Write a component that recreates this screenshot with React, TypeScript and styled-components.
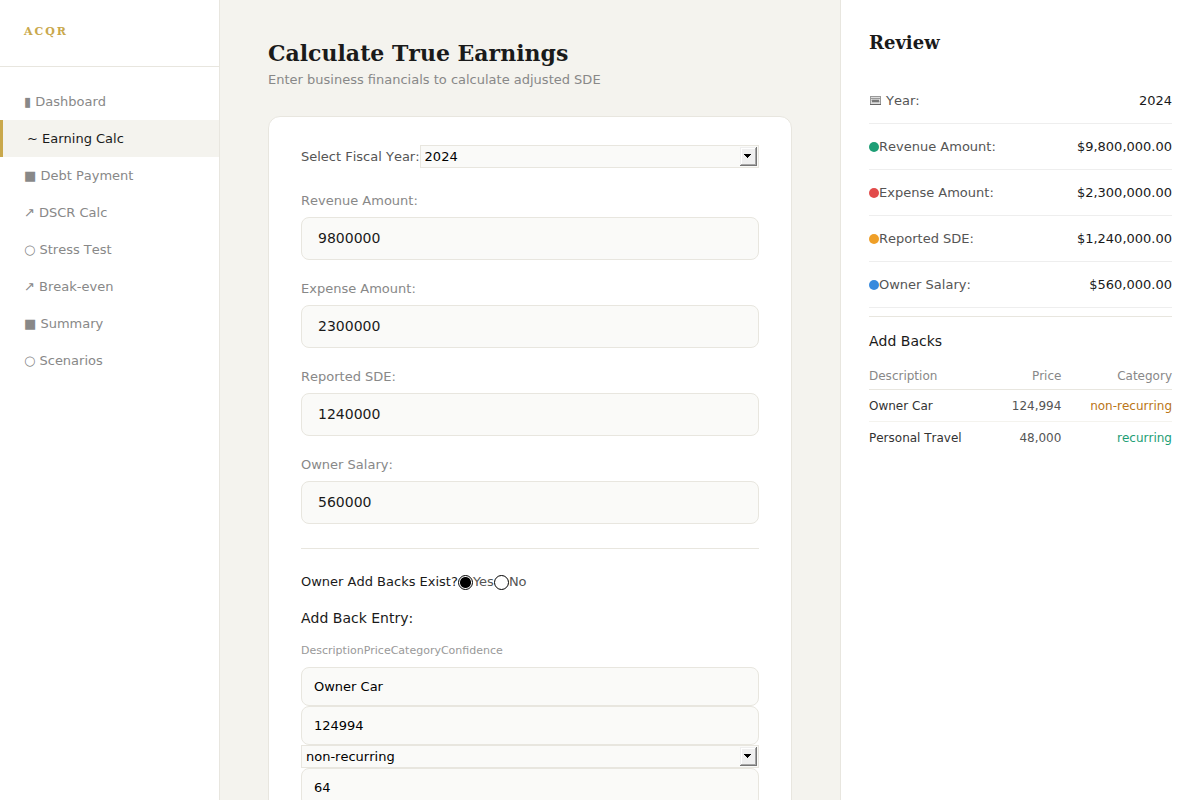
import React, { useState } from "react";
import styled, { createGlobalStyle, css } from "styled-components";

const SANS = '"DejaVu Sans", Verdana, sans-serif';
const SERIF = '"DejaVu Serif", Georgia, serif';
const LINE = "#e8e6df";

const GlobalStyle = createGlobalStyle`
  *, *::before, *::after { box-sizing: border-box; }
  body {
    margin: 0;
    background: #f4f3ee;
    color: #1a1a1a;
    font: 13px/17px ${SANS};
  }
  body, input, select, h1, h2, h3 { font-kerning: none; }
  h1, h2, h3, p, ul, dl, dd, fieldset { margin: 0; padding: 0; }
  input, select { font-family: inherit; }
`;

const Shell = styled.div`
  display: grid;
  grid-template-columns: 220px minmax(0, 1fr) 360px;
  height: 100vh;
`;

const Sidebar = styled.aside`
  background: #fff;
  border-right: 1px solid ${LINE};
`;

const Logo = styled.div`
  padding: 23px 24px 26px;
  border-bottom: 1px solid ${LINE};
  font: bold 11px/17px ${SERIF};
  font-kerning: none;
  letter-spacing: 2px;
  color: #c9a84c;
`;

const Nav = styled.nav`
  display: flex;
  flex-direction: column;
  padding: 16px 0;
`;

const NavLink = styled.a<{ $active?: boolean }>`
  padding: 10px 24px;
  color: #888;
  text-decoration: none;
  ${(p) =>
    p.$active &&
    css`
      border-left: 3px solid #c9a84c;
      background: #f4f3ee;
      color: #1a1a1a;
    `}
`;

const Main = styled.main`
  padding: 40px 48px;
  overflow-y: auto;
  scrollbar-width: none;
`;

const PageTitle = styled.h1`
  font: bold 22px/26px ${SERIF};
  font-kerning: none;
`;

const Subtitle = styled.p`
  margin-top: 5px;
  color: #888;
`;

const Card = styled.form`
  margin-top: 28px;
  padding: 28px 32px;
  background: #fff;
  border: 1px solid ${LINE};
  border-radius: 12px;
`;

const YearRow = styled.div`
  display: flex;
  align-items: center;
  color: #555;
`;

const SelectBox = styled.div`
  position: relative;
  flex: 1;
  height: 23px;
`;

const Select = styled.select`
  appearance: none;
  display: block;
  width: 100%;
  height: 100%;
  padding: 0 20px 0 4px;
  border: 1px solid ${LINE};
  border-radius: 0;
  background: #fafaf8;
  color: #000;
  font-size: 13px;
`;

const Arrow = styled.svg`
  position: absolute;
  top: 2px;
  right: 2px;
  pointer-events: none;
`;

const Fields = styled.div`
  display: grid;
  gap: 20px;
  padding: 24px 0;
  border-bottom: 1px solid ${LINE};
`;

const Field = styled.div`
  display: grid;
  gap: 8px;
`;

const FieldLabel = styled.label`
  color: #888;
`;

const Input = styled.input<{ $compact?: boolean }>`
  display: block;
  width: 100%;
  height: ${(p) => (p.$compact ? 39 : 43)}px;
  padding: ${(p) => (p.$compact ? "0 12px" : "0 16px 2px")};
  border: 1px solid ${LINE};
  border-radius: 8px;
  background: #fafaf8;
  color: ${(p) => (p.$compact ? "#000" : "#1a1a1a")};
  font-size: ${(p) => (p.$compact ? 13 : 14)}px;
`;

const RadioRow = styled.fieldset`
  display: flex;
  align-items: center;
  margin: 24px 0 16px;
  border: 0;
`;

const Option = styled.label`
  display: flex;
  align-items: center;
  font-kerning: normal;
  color: #555;
`;

const Radio = styled.input`
  appearance: none;
  width: 15px;
  height: 15px;
  margin: 2px 0 0;
  border: 1px solid #000;
  border-radius: 50%;
  background: #fff;
  &:checked {
    background: radial-gradient(circle, #000 5px, #fff 6px);
  }
`;

const EntryTitle = styled.h3`
  font: 14px/24px ${SANS};
  font-kerning: none;
`;

const EntryHead = styled.div`
  display: flex;
  margin: 12px 0 8px;
  font-size: 11px;
  color: #999;
`;

const Review = styled.aside`
  padding: 28px;
  background: #fff;
  border-left: 1px solid ${LINE};
`;

const ReviewTitle = styled.h2`
  margin-bottom: 20px;
  font: bold 18px/30px ${SERIF};
  font-kerning: none;
`;

const ReviewRow = styled.div`
  display: flex;
  justify-content: space-between;
  padding: 14px 0;
  border-bottom: 1px solid #eee;
`;

const Term = styled.dt`
  display: flex;
  align-items: center;
  color: #555;
`;

const CalendarIcon = styled.svg`
  margin-right: 4px;
`;

const Dot = styled.span<{ $color: string }>`
  width: 10px;
  height: 10px;
  border-radius: 50%;
  background: ${(p) => p.$color};
`;

const AddBacksTitle = styled.h3`
  margin-top: 8px;
  padding: 16px 0 14px;
  border-top: 1px solid ${LINE};
  font: 14px/17px ${SANS};
  font-kerning: none;
`;

const Table = styled.table`
  width: 100%;
  border-collapse: collapse;
  font-size: 12px;
`;

const Th = styled.th<{ $right?: boolean }>`
  padding: 4px 0;
  border-bottom: 1px solid ${LINE};
  font-weight: normal;
  color: #888;
  text-align: ${(p) => (p.$right ? "right" : "left")};
`;

const Tr = styled.tr`
  border-bottom: 1px solid #f4f3ee;
  &:last-child { border-bottom: 0; }
`;

const Td = styled.td<{ $color: string; $right?: boolean }>`
  padding: 8px 0 6px;
  color: ${(p) => p.$color};
  text-align: ${(p) => (p.$right ? "right" : "left")};
`;

const NAV = [
  "▮ Dashboard",
  "~ Earning Calc",
  "■ Debt Payment",
  "↗ DSCR Calc",
  "○ Stress Test",
  "↗ Break-even",
  "■ Summary",
  "○ Scenarios",
];

const AMOUNTS = [
  { id: "revenue", label: "Revenue Amount:", value: "9800000", color: "#1d9e75" },
  { id: "expense", label: "Expense Amount:", value: "2300000", color: "#e24b4a" },
  { id: "sde", label: "Reported SDE:", value: "1240000", color: "#ef9f27" },
  { id: "salary", label: "Owner Salary:", value: "560000", color: "#378add" },
];

const ADD_BACKS = [
  { name: "Owner Car", price: "124,994", category: "non-recurring" },
  { name: "Personal Travel", price: "48,000", category: "recurring" },
];

const money = (v: string) =>
  "$" + Number(v).toLocaleString("en-US", { minimumFractionDigits: 2 });

function DropDown(props: React.ComponentProps<typeof Select>) {
  return (
    <SelectBox>
      <Select {...props} />
      <Arrow width="17" height="19" viewBox="0 0 17 19" shapeRendering="crispEdges" aria-hidden="true">
        <path fill="#767676" d="M0 0h17v19H0z" />
        <path fill="#efefef" d="M0 0h16v18H0z" />
        <path fill="#a6a6a6" d="M1 1h15v17H1z" />
        <path fill="#fff" d="M1 1h14v16H1z" />
        <path fill="#efefef" d="M2 2h13v15H2z" />
        <path fill="#000" d="M4 7h7v1H4zM5 8h5v1H5zM6 9h3v1H6zM7 10h1v1H7z" />
      </Arrow>
    </SelectBox>
  );
}

export default function App() {
  const [values, setValues] = useState<Record<string, string>>(
    Object.fromEntries(AMOUNTS.map((a) => [a.id, a.value]))
  );
  const [year, setYear] = useState("2024");

  return (
    <>
      <GlobalStyle />
      <Shell>
        <Sidebar>
          <Logo>ACQR</Logo>
          <Nav>
            {NAV.map((item, i) => (
              <NavLink key={item} href="#" $active={i === 1}>
                {item}
              </NavLink>
            ))}
          </Nav>
        </Sidebar>

        <Main>
          <PageTitle>Calculate True Earnings</PageTitle>
          <Subtitle>Enter business financials to calculate adjusted SDE</Subtitle>
          <Card>
            <YearRow>
              <label htmlFor="year">Select Fiscal Year:</label>
              <DropDown id="year" value={year} onChange={(e) => setYear(e.target.value)}>
                <option>2024</option>
                <option>2023</option>
              </DropDown>
            </YearRow>
            <Fields>
              {AMOUNTS.map((a) => (
                <Field key={a.id}>
                  <FieldLabel htmlFor={a.id}>{a.label}</FieldLabel>
                  <Input
                    id={a.id}
                    value={values[a.id]}
                    onChange={(e) => setValues({ ...values, [a.id]: e.target.value })}
                  />
                </Field>
              ))}
            </Fields>
            <RadioRow>
              <span>Owner Add Backs Exist?</span>
              <Option>
                <Radio type="radio" name="addbacks" defaultChecked />
                Yes
              </Option>
              <Option>
                <Radio type="radio" name="addbacks" />
                No
              </Option>
            </RadioRow>
            <EntryTitle>Add Back Entry:</EntryTitle>
            <EntryHead>
              <label htmlFor="entry-description">Description</label>
              <label htmlFor="entry-price">Price</label>
              <label htmlFor="entry-category">Category</label>
              <label htmlFor="entry-confidence">Confidence</label>
            </EntryHead>
            <Input $compact id="entry-description" defaultValue="Owner Car" />
            <Input $compact id="entry-price" defaultValue="124994" />
            <DropDown id="entry-category" defaultValue="non-recurring">
              <option>non-recurring</option>
              <option>recurring</option>
            </DropDown>
            <Input $compact id="entry-confidence" defaultValue="64" />
          </Card>
        </Main>

        <Review>
          <ReviewTitle>Review</ReviewTitle>
          <dl>
            <ReviewRow>
              <Term>
                <CalendarIcon width="13" height="9" viewBox="0 0 13 9" aria-hidden="true">
                  <path fill="#999" d="M1 0h11v9H1z" />
                  <path fill="#ddd" d="M2 1h9v1H2zM2 3h1v4H2zM10 3h1v4h-1zM2 7h9v1H2z" />
                  <path fill="#c4c4c4" d="M3 3h7v4H3z" />
                  <path fill="#666" d="M1 8h11v1H1z" />
                  <path fill="none" stroke="#666" d="M3 4l1 2 1-2 1 2 1-2 1 2 1-2 1 2" />
                </CalendarIcon>
                Year:
              </Term>
              <dd>{year}</dd>
            </ReviewRow>
            {AMOUNTS.map((a) => (
              <ReviewRow key={a.id}>
                <Term>
                  <Dot $color={a.color} />
                  {a.label}
                </Term>
                <dd>{money(values[a.id])}</dd>
              </ReviewRow>
            ))}
          </dl>
          <AddBacksTitle>Add Backs</AddBacksTitle>
          <Table>
            <thead>
              <tr>
                <Th>Description</Th>
                <Th $right>Price</Th>
                <Th $right>Category</Th>
              </tr>
            </thead>
            <tbody>
              {ADD_BACKS.map((r) => (
                <Tr key={r.name}>
                  <Td $color="#333">{r.name}</Td>
                  <Td $color="#555" $right>{r.price}</Td>
                  <Td $color={r.category === "recurring" ? "#1d9e75" : "#ba7517"} $right>
                    {r.category}
                  </Td>
                </Tr>
              ))}
            </tbody>
          </Table>
        </Review>
      </Shell>
    </>
  );
}
